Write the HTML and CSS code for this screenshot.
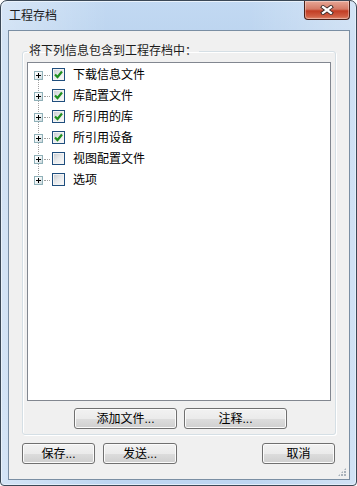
FILE: index.html
```html
<!DOCTYPE html>
<html lang="zh-CN">
<head>
    <meta charset="UTF-8">
    <meta name="viewport" content="width=device-width, initial-scale=1.0">
    <title>工程存档</title>
    <link rel="stylesheet" href="styles.css">
</head>
<body>
    <div class="window">
        <div class="titlebar">
            <span class="title">工程存档</span>
            <button class="close" type="button" title="关闭">
                <svg width="14" height="10" viewBox="0 0 14 10">
                    <path d="M3 2 L11 8 M11 2 L3 8" stroke="#3a2a28" stroke-width="4" stroke-linecap="square"/>
                    <path d="M3 2 L11 8 M11 2 L3 8" stroke="#ffffff" stroke-width="2.2" stroke-linecap="square"/>
                </svg>
            </button>
        </div>

        <div class="client">
            <fieldset class="group">
                <legend>将下列信息包含到工程存档中：</legend>
                <ul class="tree">
                    <li class="checked"><span class="expander"></span><span class="joint"></span><span class="check"></span><span class="label">下载信息文件</span></li>
                    <li class="checked"><span class="expander"></span><span class="joint"></span><span class="check"></span><span class="label">库配置文件</span></li>
                    <li class="checked"><span class="expander"></span><span class="joint"></span><span class="check"></span><span class="label">所引用的库</span></li>
                    <li class="checked"><span class="expander"></span><span class="joint"></span><span class="check"></span><span class="label">所引用设备</span></li>
                    <li><span class="expander"></span><span class="joint"></span><span class="check"></span><span class="label">视图配置文件</span></li>
                    <li><span class="expander"></span><span class="joint"></span><span class="check"></span><span class="label">选项</span></li>
                </ul>
                <div class="group-actions">
                    <button class="btn btn-wide" type="button">添加文件...</button>
                    <button class="btn btn-wide" type="button">注释...</button>
                </div>
            </fieldset>

            <div class="actions">
                <button class="btn" type="button">保存...</button>
                <button class="btn btn-send" type="button">发送...</button>
                <button class="btn btn-cancel" type="button">取消</button>
            </div>

            <span class="grip"></span>
        </div>
    </div>

    <script>
        // tick the boxes of the checked rows
        document.querySelectorAll('.tree li.checked .check').forEach(function (box) {
            box.innerHTML = '<svg width="11" height="11" viewBox="0 0 11 11">' +
                '<path d="M2 5.5 L4.5 8 L9 2.5" fill="none" stroke="#1f8f1f" stroke-width="2.2"/></svg>';
        });
    </script>
</body>
</html>
```

FILE: styles.css
```css
* {
    box-sizing: border-box;
}
body {
    margin: 0;
    background-color: #ffffff;
    font-family: "Liberation Sans", "Noto Sans CJK SC", sans-serif;
    font-size: 12px;
    color: #000;
}
.window {
    width: 357px;
    height: 486px;
    border: 1px solid #3b4856;
    border-radius: 7px 7px 4px 4px;
    padding: 0 6px 5px 7px;
    display: flex;
    flex-direction: column;
    background:
        linear-gradient(to right, rgba(255,255,255,0.35), rgba(255,255,255,0) 30%, rgba(255,255,255,0) 70%, rgba(255,255,255,0.3)),
        linear-gradient(#c2d9f2, #bcd4ef 40px, #bed6f1);
    box-shadow: inset 1px 1px 0 #e9f2fb, inset -1px -1px 0 #e3eefa;
}
.titlebar {
    height: 29px;
    display: flex;
    align-items: flex-start;
}
.title {
    margin: 7px 0 0 1px;
    line-height: 16px;
    color: #1b1b1b;
}
.close {
    margin-left: auto;
    width: 46px;
    height: 19px;
    padding: 0;
    border: 1px solid #4a2119;
    border-top: none;
    border-radius: 0 0 4px 4px;
    background: linear-gradient(#e7a796, #d47a66 45%, #c23d24 55%, #d05f44 85%, #e08a6f);
    box-shadow: inset 0 0 0 1px rgba(255,255,255,0.35);
    display: flex;
    align-items: center;
    justify-content: center;
}
.client {
    flex: 1;
    position: relative;
    display: flex;
    flex-direction: column;
    border: 1px solid #7a8ea3;
    background-color: #f0f0f0;
}
.group {
    margin: 12px 13px 0;
    padding: 0 4px 5px;
    min-width: 0;
    border: 1px solid #d5dfe5;
    border-radius: 3px;
    box-shadow: inset 1px 1px 0 #fff, 1px 1px 0 #fff;
}
.group legend {
    padding: 0 2px;
    line-height: 16px;
    color: #1b1b1b;
}
.tree {
    height: 339px;
    margin: 3px 0 0;
    padding: 1px 0 0;
    list-style: none;
    border: 1px solid #828790;
    background-color: #fff;
}
.tree li {
    position: relative;
    height: 21px;
    display: flex;
    align-items: center;
    padding-left: 6px;
}
.tree li:not(:last-child)::before {
    content: "";
    position: absolute;
    left: 10px;
    top: 15px;
    height: 12px;
    border-left: 1px dotted #a0a0a0;
}
.expander {
    position: relative;
    width: 9px;
    height: 9px;
    margin-top: 1px;
    border: 1px solid #8fb0b8;
    background: linear-gradient(135deg, #ffffff, #f2f6f7 45%, #c9d7dc);
}
.expander::before,
.expander::after {
    content: "";
    position: absolute;
    background-color: #000;
}
.expander::before {
    left: 1px;
    top: 3px;
    width: 5px;
    height: 1px;
}
.expander::after {
    left: 3px;
    top: 1px;
    width: 1px;
    height: 5px;
}
.joint {
    width: 6px;
    margin: 1px 2px 0 1px;
    border-top: 1px dotted #a0a0a0;
}
.check {
    width: 13px;
    height: 13px;
    margin-right: 8px;
    border: 1px solid #1f4e7d;
    background: linear-gradient(135deg, #c4c8cd, #e8eaec 50%, #fbfbfb);
    box-shadow: inset 0 0 0 1px #f4f4f4;
    display: flex;
    align-items: center;
    justify-content: center;
}
.label {
    line-height: 16px;
    color: #000;
}
.group-actions {
    display: flex;
    justify-content: center;
    gap: 7px;
    margin-top: 7px;
    padding-left: 3px;
}
.btn {
    height: 21px;
    padding: 0;
    border: 1px solid #707070;
    border-radius: 3px;
    background: linear-gradient(#f2f2f2, #ebebeb 50%, #dddddd 51%, #cfcfcf);
    box-shadow: inset 0 0 0 1px #fbfbfb;
    font-family: "Liberation Sans", "Noto Sans CJK SC", sans-serif;
    font-size: 12px;
    line-height: 16px;
    color: #000;
    width: 73px;
}
.btn-wide {
    width: 103px;
}
.btn-send {
    width: 74px;
}
.actions {
    display: flex;
    gap: 8px;
    margin: 8px 14px 0 13px;
}
.btn-cancel {
    margin-left: auto;
}
.grip {
    position: absolute;
    right: 3px;
    bottom: 3px;
    width: 8px;
    height: 8px;
    background:
        radial-gradient(circle at 1px 1px, #a9b2bb 1px, transparent 1.2px) 0 0 / 3px 3px;
    clip-path: polygon(100% 0, 100% 100%, 0 100%);
}
```
